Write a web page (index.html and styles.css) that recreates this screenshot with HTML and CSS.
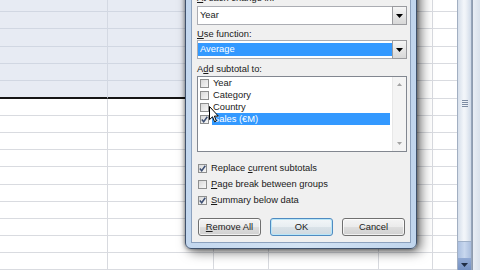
FILE: index.html
```html
<!DOCTYPE html>
<html>
<head>
<meta charset="utf-8">
<link rel="stylesheet" href="styles.css">
</head>
<body>
<div class="app">
  <div class="sheet">
    <div class="c s"></div><div class="c s"></div><div class="c s"></div><div class="c s"></div><div class="c"></div><div class="c e"></div>
    <div class="c s"></div><div class="c s"></div><div class="c s"></div><div class="c s"></div><div class="c"></div><div class="c e"></div>
    <div class="c s"></div><div class="c s"></div><div class="c s"></div><div class="c s"></div><div class="c"></div><div class="c e"></div>
    <div class="c s"></div><div class="c s"></div><div class="c s"></div><div class="c s"></div><div class="c"></div><div class="c e"></div>
    <div class="c s"></div><div class="c s"></div><div class="c s"></div><div class="c s"></div><div class="c"></div><div class="c e"></div>
    <div class="c s b"></div><div class="c s b"></div><div class="c s b"></div><div class="c s b"></div><div class="c"></div><div class="c e"></div>
    <div class="c"></div><div class="c"></div><div class="c"></div><div class="c"></div><div class="c"></div><div class="c e"></div>
    <div class="c"></div><div class="c"></div><div class="c"></div><div class="c"></div><div class="c"></div><div class="c e"></div>
    <div class="c"></div><div class="c"></div><div class="c"></div><div class="c"></div><div class="c"></div><div class="c e"></div>
    <div class="c"></div><div class="c"></div><div class="c"></div><div class="c"></div><div class="c"></div><div class="c e"></div>
    <div class="c"></div><div class="c"></div><div class="c"></div><div class="c"></div><div class="c"></div><div class="c e"></div>
    <div class="c"></div><div class="c"></div><div class="c"></div><div class="c"></div><div class="c"></div><div class="c e"></div>
    <div class="c"></div><div class="c"></div><div class="c"></div><div class="c"></div><div class="c"></div><div class="c e"></div>
    <div class="c"></div><div class="c"></div><div class="c"></div><div class="c"></div><div class="c"></div><div class="c e"></div>
    <div class="c"></div><div class="c"></div><div class="c"></div><div class="c"></div><div class="c"></div><div class="c e"></div>
    <div class="c"></div><div class="c"></div><div class="c"></div><div class="c"></div><div class="c"></div><div class="c e"></div>
  </div>
  <div class="vscroll">
    <div class="thumb"><div class="grip"><i></i><i></i><i></i><i></i></div></div>
    <div class="track"></div>
    <div class="down"><svg width="7" height="4" viewBox="0 0 7 4"><path d="M0 0H7L3.5 4Z" fill="#1f2c44"/></svg></div>
  </div>
  <div class="edge"></div>
</div>

<div class="dialog">
  <div class="panel">
    <div class="lbl"><u>A</u>t each change in:</div>
    <div class="combo first">
      <div class="val">Year</div>
      <div class="btn"><svg width="7" height="4" viewBox="0 0 7 4"><path d="M0 0H7L3.5 4Z" fill="#000"/></svg></div>
    </div>
    <div class="lbl gap3"><u>U</u>se function:</div>
    <div class="combo">
      <div class="val hl">Average</div>
      <div class="btn"><svg width="7" height="4" viewBox="0 0 7 4"><path d="M0 0H7L3.5 4Z" fill="#000"/></svg></div>
    </div>
    <div class="lbl gap4">A<u>d</u>d subtotal to:</div>
    <div class="list">
      <div class="items">
        <div class="it"><span class="cb"></span><span class="txt">Year</span></div>
        <div class="it"><span class="cb"></span><span class="txt">Category</span></div>
        <div class="it"><span class="cb"></span><span class="txt">Country</span></div>
        <div class="it"><span class="cb"><svg width="9" height="9" viewBox="0 0 9 9"><path d="M1.8 4.6 3.7 6.8 7.3 1.8" fill="none" stroke="#3d4f73" stroke-width="1.5"/></svg></span><span class="txt sel">Sales (€M)</span></div>
      </div>
      <div class="lscroll">
        <svg width="5" height="3" viewBox="0 0 5 3"><path d="M0 3H5L2.5 0Z" fill="#a3a3a3"/></svg>
        <svg width="5" height="3" viewBox="0 0 5 3"><path d="M0 0H5L2.5 3Z" fill="#a3a3a3"/></svg>
      </div>
    </div>
    <div class="opts">
      <div class="opt"><span class="cb"><svg width="9" height="9" viewBox="0 0 9 9"><path d="M1.8 4.6 3.7 6.8 7.3 1.8" fill="none" stroke="#3d4f73" stroke-width="1.5"/></svg></span><span class="txt">Replace <u>c</u>urrent subtotals</span></div>
      <div class="opt"><span class="cb"></span><span class="txt"><u>P</u>age break between groups</span></div>
      <div class="opt"><span class="cb"><svg width="9" height="9" viewBox="0 0 9 9"><path d="M1.8 4.6 3.7 6.8 7.3 1.8" fill="none" stroke="#3d4f73" stroke-width="1.5"/></svg></span><span class="txt"><u>S</u>ummary below data</span></div>
    </div>
    <div class="btns">
      <div class="button"><u>R</u>emove All</div>
      <div class="button def">OK</div>
      <div class="button">Cancel</div>
    </div>
  </div>
</div>

<svg class="cursor" width="10" height="17" viewBox="0 0 10 17"><path d="M0.5 0.5V13.6L3.5 10.8L5.6 15.8L7.4 15L5.4 10.1H9.3Z" fill="#fff" stroke="#000" stroke-width="1" stroke-linejoin="round"/></svg>
</body>
</html>
```

FILE: styles.css
```css
html, body {
  margin: 0;
  padding: 0;
}
body {
  width: 480px;
  height: 270px;
  overflow: hidden;
  position: relative;
  background: #fff;
  font-family: "Liberation Sans", Arial, sans-serif;
  font-size: 9.35px;
  color: #1a1a1a;
}
.app {
  display: flex;
  width: 480px;
  height: 270px;
}
.sheet {
  width: 457px;
  display: grid;
  grid-template-columns: 108px 106px 55px 110px 54px 1fr;
  grid-template-rows: 12px 17px 18px 17px 17px 18px 17px 17px 17px 17px 18px 17px 17px 17px 17px 17px;
}
.c {
  box-sizing: border-box;
  border-right: 1px solid #d8dadf;
  border-bottom: 1px solid #d9dbe0;
  background: #fff;
}
.c.e {
  border-right: none;
}
.c.s {
  background: #e7ebf3;
  border-bottom-color: #d1d7e2;
  border-right-color: #d4d9e3;
}
.c.b {
  border-bottom: 2px solid #151515;
}
.vscroll {
  width: 15px;
  box-sizing: border-box;
  border-left: 1px solid #a2afc2;
  border-right: 1px solid #97a6bb;
  display: flex;
  flex-direction: column;
  background: #e6ecf4;
}
.thumb {
  flex: 1;
  background: linear-gradient(90deg, #d6dfeb, #f3f6fa 45%, #eef2f7 60%, #d0dae8);
  border-bottom: 1px solid #9fb0c8;
}
.grip {
  margin: 100px auto 0;
  width: 6px;
  display: flex;
  flex-direction: column;
  gap: 1px;
}
.grip i {
  display: block;
  height: 1px;
  background: #7d8ca3;
}
.track {
  height: 16px;
  background: linear-gradient(90deg, #aabfe0, #c8d7ee 50%, #a9bddd);
}
.down {
  height: 12px;
  background: linear-gradient(#91a9d3, #7490c2);
  display: flex;
  align-items: flex-end;
  justify-content: center;
  padding-bottom: 3px;
  box-sizing: border-box;
}
.down svg {
  display: block;
}
.edge {
  width: 8px;
  box-sizing: border-box;
  border-left: 1px solid #8e9bae;
  background: linear-gradient(90deg, #e9eef5, #d9e1eb);
}

/* dialog */
.dialog {
  position: absolute;
  left: 185px;
  top: -20px;
  width: 232px;
  box-sizing: border-box;
  border: 1px solid #3f516b;
  border-radius: 0 0 6px 6px;
  padding: 5px;
  background: linear-gradient(90deg, #c3d7ee, #d3e3f4 50%, #c0d5ed);
  box-shadow: 0 0 4px rgba(0, 0, 0, 0.5), 4px 3px 12px rgba(0, 0, 0, 0.55);
}
.panel {
  border: 1px solid #8da2be;
  background: #f0f0f0;
  padding: 5px 3px 6px 5px;
  display: flex;
  flex-direction: column;
}
.lbl {
  height: 12px;
  line-height: 12px;
  white-space: nowrap;
}
.gap3 { margin-top: 3px; }
.gap4 { margin-top: 4px; }
.combo {
  height: 19px;
  box-sizing: border-box;
  border: 1px solid #abadb3;
  background: #fff;
  display: flex;
  align-items: stretch;
}
.combo.first {
  margin-top: 2px;
}
.val {
  flex: 1;
  padding-left: 2px;
  line-height: 17px;
}
.val.hl {
  background: #3399ff;
  color: #fff;
  margin: 2px 0;
  line-height: 13px;
}
.btn {
  width: 15px;
  box-sizing: border-box;
  border: 1px solid #9a9b9f;
  margin: -1px -1px -1px 0;
  background: linear-gradient(#f6f6f6, #e6e6e6 50%, #d8d8d8);
  display: flex;
  align-items: center;
  justify-content: center;
}
.btn svg { display: block; }
.list {
  margin-top: 1px;
  height: 76px;
  box-sizing: border-box;
  border: 1px solid #828790;
  background: #fff;
  display: flex;
}
.items {
  flex: 1;
  padding-left: 2px;
  display: flex;
  flex-direction: column;
}
.it {
  height: 12px;
  display: flex;
  align-items: center;
}
.cb {
  width: 9px;
  height: 9px;
  box-sizing: border-box;
  border: 1px solid #8e8f8f;
  background: linear-gradient(135deg, #d9d9d9, #f7f7f7);
  flex: none;
  position: relative;
}
.cb svg {
  position: absolute;
  left: -1px;
  top: -1px;
}
.it .txt {
  margin-left: 3px;
  padding-left: 1px;
  line-height: 12px;
  flex: 1;
  margin-right: 2px;
}
.it .txt.sel {
  background: #3399ff;
  color: #fff;
}
.lscroll {
  width: 14px;
  background: #f4f4f4;
  border-left: 1px solid #e8e8e8;
  display: flex;
  flex-direction: column;
  justify-content: space-between;
  align-items: center;
  padding: 6px 0 6px;
  box-sizing: border-box;
}
.lscroll svg { display: block; }
.opts {
  margin-top: 8px;
  display: flex;
  flex-direction: column;
}
.opt {
  height: 16px;
  display: flex;
  align-items: center;
  padding-left: 1px;
}
.opt .txt {
  margin-left: 4px;
  white-space: nowrap;
}
.btns {
  margin-top: 10px;
  padding: 0 2px 0 1px;
  display: flex;
  justify-content: space-between;
}
.button {
  width: 63px;
  height: 18px;
  box-sizing: border-box;
  border: 1px solid #707070;
  border-radius: 3px;
  background: linear-gradient(#f4f4f4, #ebebeb 48%, #dddddd 52%, #d0d0d0);
  box-shadow: inset 0 0 0 1px rgba(255, 255, 255, 0.7);
  text-align: center;
  line-height: 16px;
  white-space: nowrap;
}
.button.def {
  border-color: #4f8bc1;
  box-shadow: inset 0 0 0 1px #b9e6f8;
  background: linear-gradient(#f2f6f8, #e8eef2 48%, #d9e2e8 52%, #cfd9e0);
}
.cursor {
  position: absolute;
  left: 209px;
  top: 106px;
}
```
